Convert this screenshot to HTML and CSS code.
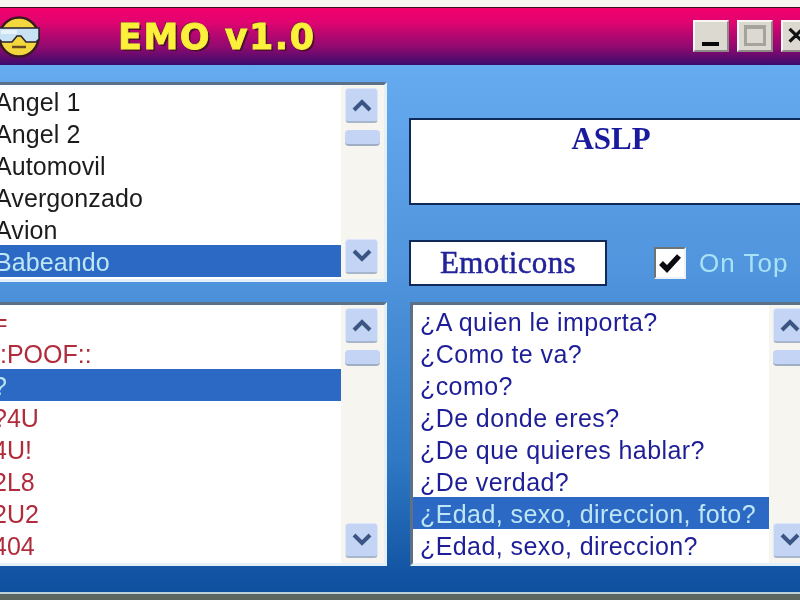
FILE: index.html
```html
<!DOCTYPE html>
<html lang="es">
<head>
<meta charset="utf-8">
<title>EMO v1.0</title>
<link rel="stylesheet" href="styles.css">
</head>
<body>
<div class="window">
  <div class="titlebar">
    <svg class="face" width="44" height="46" viewBox="0 0 44 46">
      <circle cx="22" cy="23" r="19.5" fill="#f2d83c" stroke="#3a1a20" stroke-width="2.5"/>
      <path d="M2 14H42V25L39 28H29L24 22H20L15 28H5L2 25Z" fill="#c8e2f4" stroke="#2a2030" stroke-width="1.5"/>
      <path d="M4 16H20V20H4Z" fill="#e8f2fa"/>
      <path d="M15 33H29" stroke="#6a4a20" stroke-width="2.5"/>
    </svg>
    <div class="title">EMO v1.0</div>
    <div class="controls">
      <div class="winbtn"><span class="min-glyph"></span></div>
      <div class="winbtn"><span class="max-glyph"></span></div>
      <div class="winbtn close-btn">✕</div>
    </div>
  </div>
  <div class="content">
    <div class="col col-left">
      <div class="listbox list-top">
        <ul class="items black">
          <li>Angel 1</li><li>Angel 2</li><li>Automovil</li><li>Avergonzado</li><li>Avion</li><li class="sel">Babeando</li>
        </ul>
        <div class="scroll">
          <div class="arrow"><svg width="22" height="14" viewBox="0 0 22 14"><path d="M3 12L11 4L19 12" class="chev"/></svg></div>
          <div class="thumb"></div>
          <div class="spacer"></div>
          <div class="arrow"><svg width="22" height="14" viewBox="0 0 22 14"><path d="M3 2L11 10L19 2" class="chev"/></svg></div>
        </div>
      </div>
      <div class="listbox list-low">
        <ul class="items red">
          <li>=</li><li>::POOF::</li><li class="sel">?</li><li>?4U</li><li>4U!</li><li>2L8</li><li>2U2</li><li>404</li>
        </ul>
        <div class="scroll">
          <div class="arrow"><svg width="22" height="14" viewBox="0 0 22 14"><path d="M3 12L11 4L19 12" class="chev"/></svg></div>
          <div class="thumb"></div>
          <div class="spacer"></div>
          <div class="arrow"><svg width="22" height="14" viewBox="0 0 22 14"><path d="M3 2L11 10L19 2" class="chev"/></svg></div>
        </div>
      </div>
    </div>
    <div class="col col-right">
      <div class="aslp">ASLP</div>
      <div class="option-row">
        <div class="emoticons">Emoticons</div>
        <div class="check">
          <svg width="24" height="22" viewBox="0 0 24 22"><path d="M3 11L9 17L21 4" fill="none" stroke="#0a0a10" stroke-width="5.5"/></svg>
        </div>
        <div class="ontop">On Top</div>
      </div>
      <div class="listbox list-low list-right">
        <ul class="items blue">
          <li>¿A quien le importa?</li><li>¿Como te va?</li><li>¿como?</li><li>¿De donde eres?</li><li>¿De que quieres hablar?</li><li>¿De verdad?</li><li class="sel">¿Edad, sexo, direccion, foto?</li><li>¿Edad, sexo, direccion?</li>
        </ul>
        <div class="scroll">
          <div class="arrow"><svg width="22" height="14" viewBox="0 0 22 14"><path d="M3 12L11 4L19 12" class="chev"/></svg></div>
          <div class="thumb"></div>
          <div class="spacer"></div>
          <div class="arrow"><svg width="22" height="14" viewBox="0 0 22 14"><path d="M3 2L11 10L19 2" class="chev"/></svg></div>
        </div>
      </div>
    </div>
  </div>
  <div class="footer"></div>
</div>
</body>
</html>
```
FILE: styles.css
```css
html, body {
  margin: 0;
  padding: 0;
  width: 800px;
  height: 600px;
  overflow: hidden;
  background: #f6f5ef;
}
.window {
  width: 828px;
  margin-left: -8px;
  padding-top: 7px;
  display: flex;
  flex-direction: column;
  font-family: "Liberation Sans", Arial, sans-serif;
  filter: blur(0.5px);
}
.titlebar {
  height: 57px;
  display: flex;
  align-items: center;
  border-top: 1px solid #3a1020;
  background: linear-gradient(#f4006c 0%, #e00470 25%, #8c0a70 70%, #3a0a6c 100%);
}
.face {
  margin-left: 5px;
  flex: none;
}
.title {
  margin-left: 77px;
  font-family: "DejaVu Sans", sans-serif;
  font-weight: bold;
  font-size: 35px;
  letter-spacing: 1.5px;
  color: #fbf13a;
  -webkit-text-stroke: 0.8px #fbf13a;
  text-shadow: 2px 2px 0 #4a1030, -1px -1px 0 #7a2040;
  white-space: nowrap;
}
.controls {
  margin-left: auto;
  margin-right: 3px;
  margin-bottom: 2px;
  display: flex;
  gap: 8px;
}
.winbtn {
  width: 36px;
  height: 32px;
  box-sizing: border-box;
  background: #dcdad0;
  border: 2px solid;
  border-color: #f8f6f2 #8f8888 #8f8888 #f8f6f2;
  display: flex;
  align-items: flex-end;
  justify-content: center;
}
.min-glyph {
  width: 17px;
  height: 4px;
  background: #0a0a0a;
  margin-bottom: 4px;
  margin-right: 2px;
}
.max-glyph {
  width: 22px;
  height: 21px;
  box-sizing: border-box;
  border: 3px solid #a4a49c;
  border-top-width: 4px;
  margin-bottom: 4px;
}
.close-btn {
  align-items: center;
  font-size: 24px;
  font-weight: bold;
  color: #111;
  justify-content: flex-start;
  padding-left: 3px;
}
.content {
  height: 527px;
  box-sizing: border-box;
  padding-top: 17px;
  background: linear-gradient(#66aaf0 0%, #4f94dc 40%, #2f78c4 75%, #0e4f9e 100%);
  display: flex;
  gap: 22px;
}
.col {
  display: flex;
  flex-direction: column;
}
.col-left {
  width: 395px;
  gap: 20px;
}
.col-right {
  width: 406px;
  padding-top: 36px;
}
.listbox {
  display: flex;
  box-sizing: border-box;
  background: #fff;
  border: 3px solid;
  border-color: #5c7088 #e4f0f8 #e4f0f8 #5c7088;
}
.list-top {
  height: 200px;
}
.list-low {
  height: 264px;
}
.col-left .listbox {
  border-left: 0;
}
.list-right {
  margin-top: 16px;
  margin-left: 1px;
}
.items {
  list-style: none;
  margin: 0;
  padding: 0;
  flex: 1;
  min-width: 0;
  overflow: hidden;
  font-size: 25px;
  line-height: 34px;
}
.items li {
  height: 32px;
  padding-left: 3px;
  white-space: nowrap;
}
.red li {
  padding-left: 1px;
}
.list-right .items li {
  padding-left: 7px;
}
.black { color: #1c1c1c; letter-spacing: 0.1px; }
.red { color: #b02c3c; }
.blue { color: #1e1e96; letter-spacing: 0.42px; }
.items .sel {
  background: #2b69c4;
  color: #bfe6f4;
}
.scroll {
  width: 43px;
  flex: none;
  box-sizing: border-box;
  padding: 3px 3px 5px 4px;
  background: #f6f5ef;
  display: flex;
  flex-direction: column;
}
.arrow {
  width: 33px;
  height: 35px;
  flex: none;
  box-sizing: border-box;
  background: #c4d4f4;
  border: 1px solid #dde6fa;
  border-bottom: 2px solid #a8b6cc;
  border-radius: 4px;
  display: flex;
  align-items: center;
  justify-content: center;
}
.chev {
  fill: none;
  stroke: #3c5684;
  stroke-width: 4;
}
.thumb {
  width: 35px;
  height: 16px;
  flex: none;
  margin-top: 7px;
  box-sizing: border-box;
  background: #c4d4f4;
  border-bottom: 2px solid #a0aec4;
  border-radius: 4px;
}
.spacer {
  flex: 1;
}
.aslp {
  height: 87px;
  width: 404px;
  box-sizing: border-box;
  background: #fff;
  border: 2px solid #0f2a58;
  text-align: center;
  font-family: "Liberation Serif", serif;
  font-weight: bold;
  font-size: 31px;
  line-height: 38px;
  color: #1a1a9c;
}
.option-row {
  margin-top: 35px;
  height: 46px;
  display: flex;
  align-items: center;
}
.emoticons {
  width: 198px;
  height: 46px;
  box-sizing: border-box;
  background: #fff;
  border: 2px solid #0f2a58;
  text-align: center;
  font-family: "Liberation Serif", serif;
  font-size: 31px;
  letter-spacing: 0.4px;
  -webkit-text-stroke: 0.5px #22229a;
  line-height: 41px;
  color: #22229a;
}
.check {
  width: 32px;
  height: 32px;
  margin-left: 47px;
  box-sizing: border-box;
  background: #fff;
  border: 2px solid;
  border-color: #6c7478 #e8f2f8 #e8f2f8 #6c7478;
  display: flex;
  align-items: center;
  justify-content: center;
}
.ontop {
  margin-left: 13px;
  font-size: 26px;
  letter-spacing: 1px;
  color: #a8e2f6;
}
.footer {
  height: 8px;
  box-sizing: border-box;
  border-top: 2px solid #bcd0d8;
  background: #5c6660;
}
```
